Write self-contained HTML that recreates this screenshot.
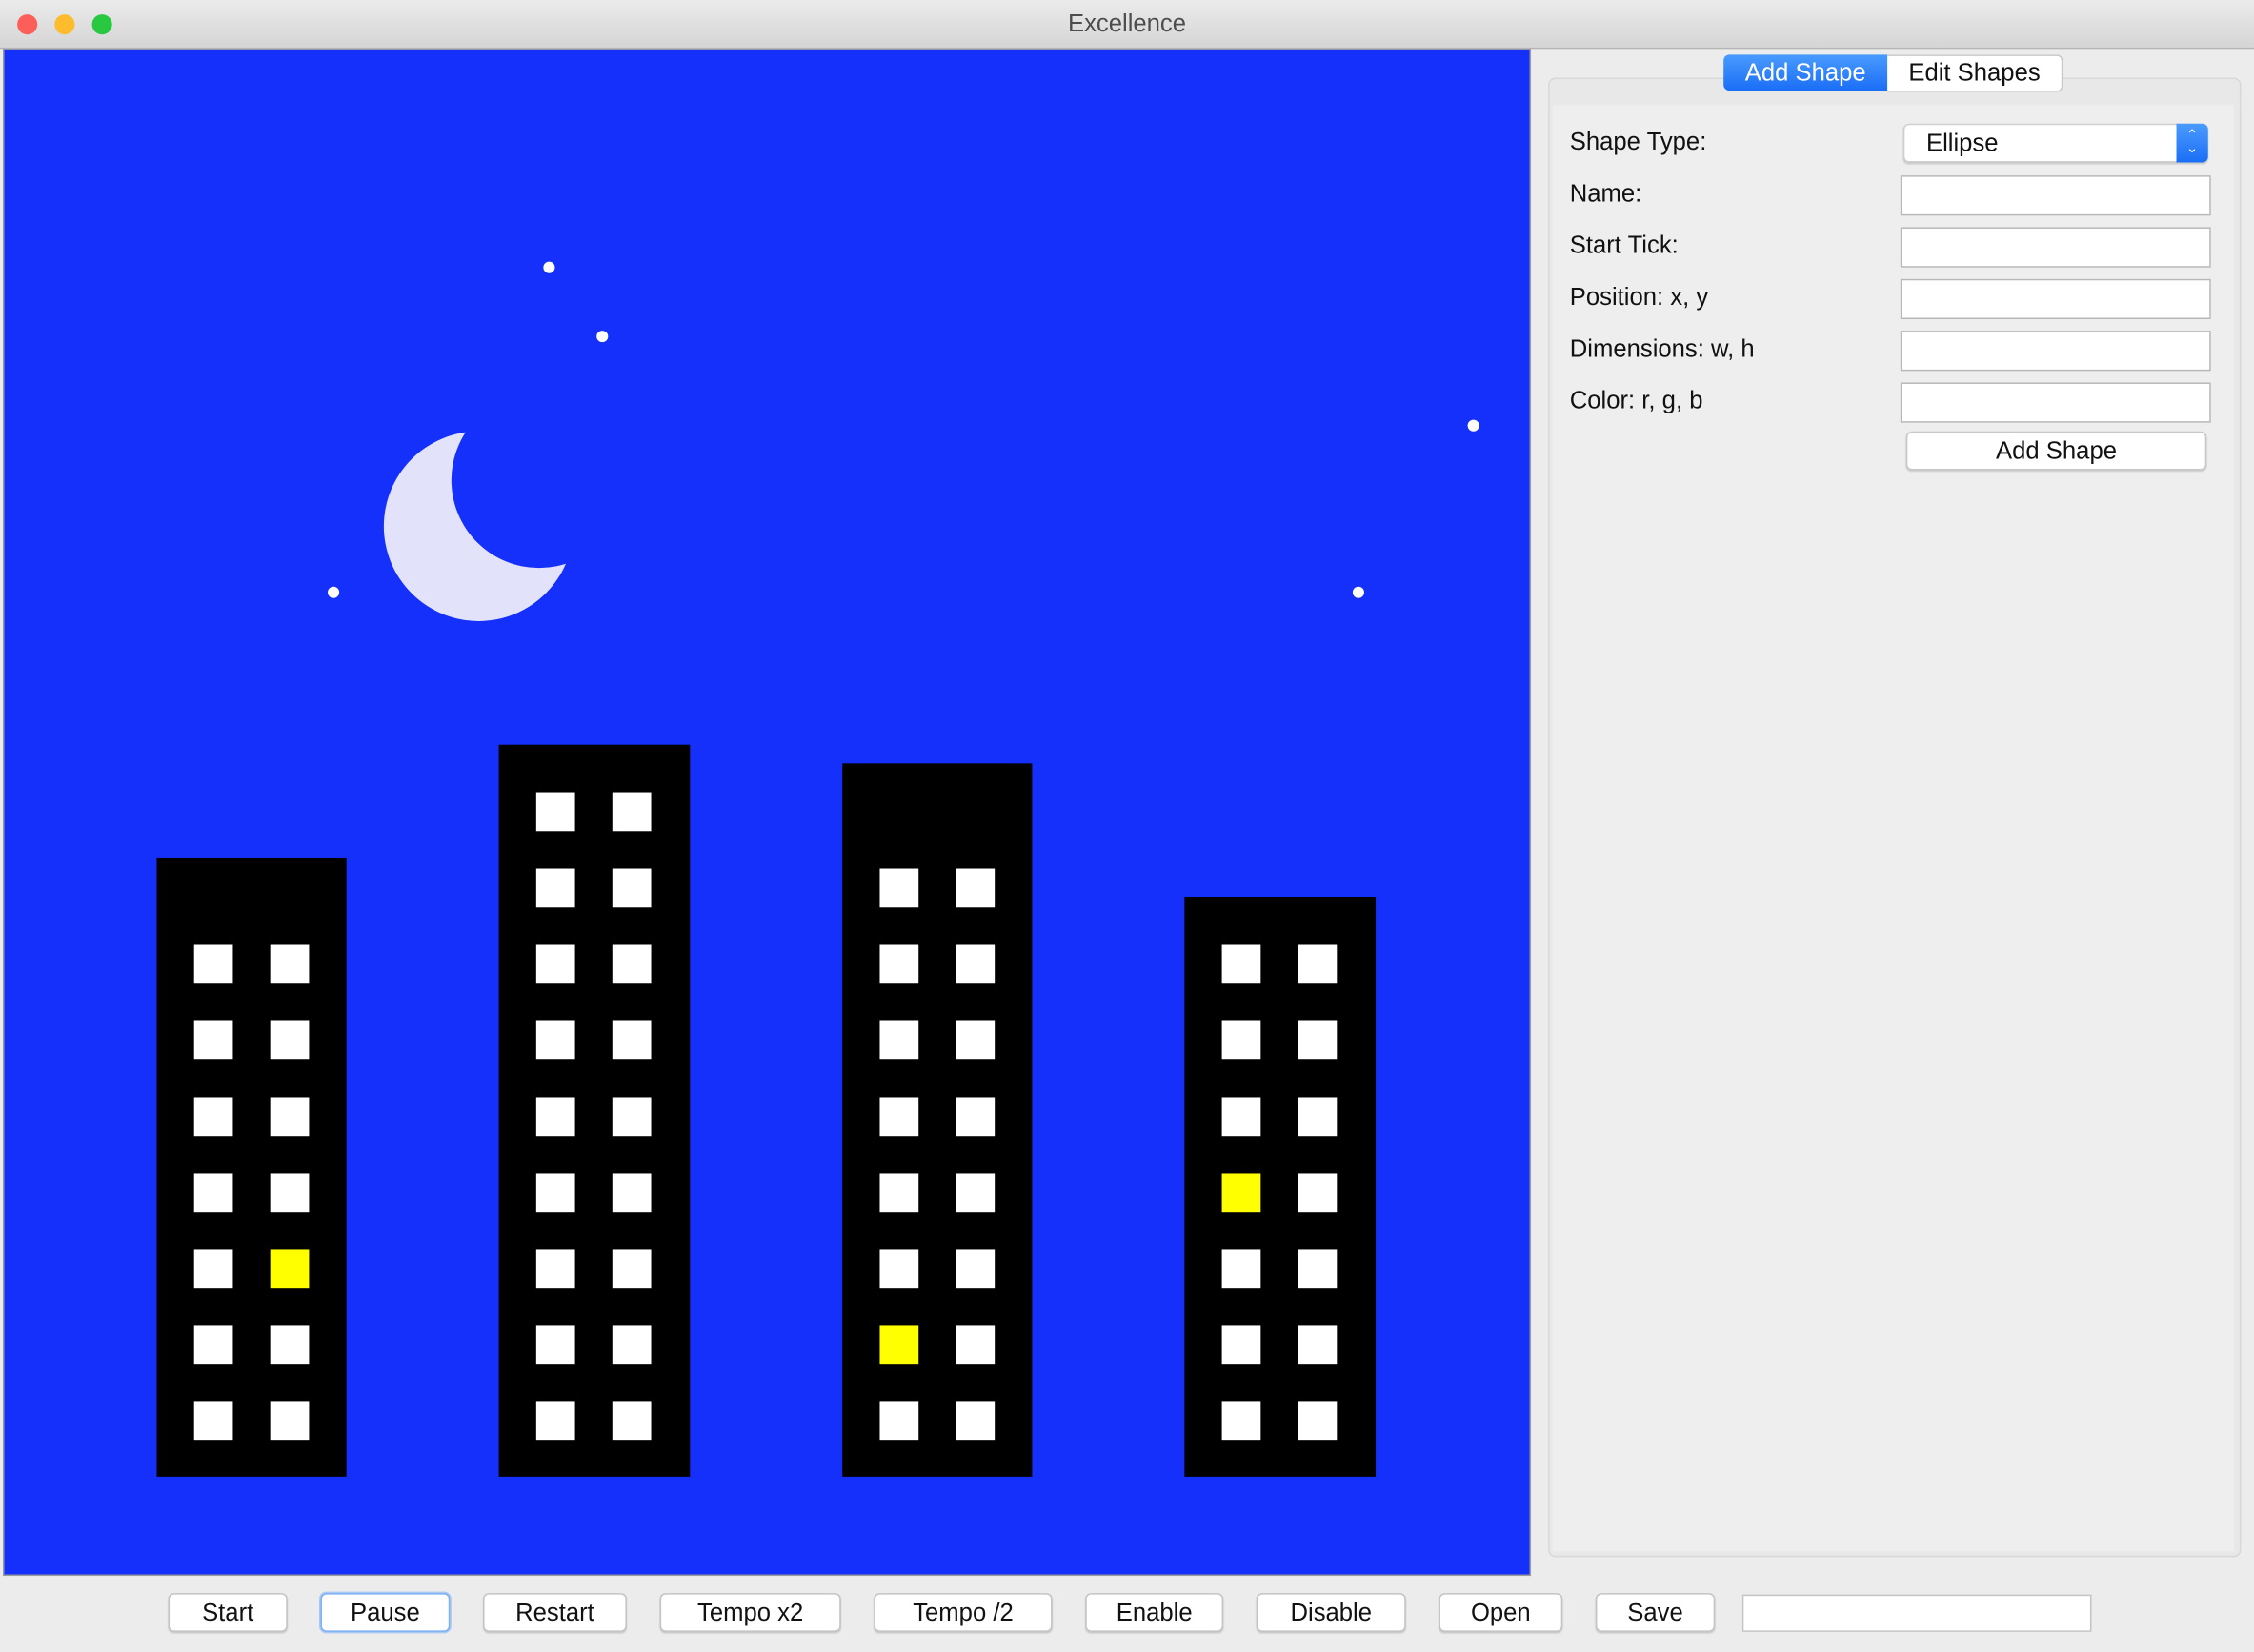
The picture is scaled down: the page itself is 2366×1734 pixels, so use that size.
<!DOCTYPE html>
<html><head><meta charset="utf-8"><style>
html,body{margin:0;padding:0;width:2366px;height:1734px;overflow:hidden;background:#ececec}
#w{position:absolute;left:0;top:0;width:1568px;height:1149px;transform:scale(1.50893,1.50914);transform-origin:0 0;font-family:"Liberation Sans",sans-serif;font-size:17px;color:#111}
.a{position:absolute}
#title{left:0;top:0;width:1568px;height:33px;background:linear-gradient(#ebebeb,#d5d5d5);border-bottom:1px solid #b5b5b5;text-align:center;line-height:34px;color:#4d4d4d;font-size:17px}
.dot{position:absolute;top:10px;width:14px;height:14px;border-radius:50%}
#cv{left:2px;top:34px;width:1061px;height:1060px;background:#1430fa;border:1px solid #9a9a9a;overflow:hidden}
.b{position:absolute;background:#000}
.wn{position:absolute;width:27px;height:27px;background:#fff}
.y{background:#ffff00}
.st{position:absolute;width:8px;height:8px;border-radius:50%;background:#fff}
.lbl{position:absolute;left:1092px}
.fld{position:absolute;left:1322px;width:214px;height:26px;background:#fff;border:1px solid #b8b8b8}
.btn{position:absolute;top:1108px;height:25px;background:#fff;border:1px solid #c4c4c4;border-radius:4px;text-align:center;line-height:25px;box-shadow:0 1px 1px rgba(0,0,0,.15)}
</style></head><body><div id="w">
<div id="title" class="a">Excellence
<div class="dot" style="left:12px;background:#fc5f57"></div>
<div class="dot" style="left:38px;background:#fdbc2e"></div>
<div class="dot" style="left:64px;background:#28c840"></div>
</div>
<div id="cv" class="a">
<svg width="1061" height="1060" style="position:absolute;left:0;top:0">
<defs><mask id="m"><rect width="1061" height="1060" fill="#fff"/><circle cx="372" cy="299" r="61" fill="#000"/></mask></defs>
<circle cx="330" cy="331" r="66" fill="#e2e2fb" mask="url(#m)"/>
</svg>
<div class="st" style="left:375px;top:147px"></div>
<div class="st" style="left:412px;top:195px"></div>
<div class="st" style="left:1018px;top:257px"></div>
<div class="st" style="left:225px;top:373px"></div>
<div class="st" style="left:938px;top:373px"></div>
</div>
<script>
var cv=document.getElementById('cv');
var B=[[106,562,132,[657],7,[[4,1]]],[344,483,133,[551],9,[]],[583,496,132,[604],8,[[6,0]]],[821,589,133,[657],7,[[3,0]]]];
var h='';
B.forEach(function(b){h+='<div class="b" style="left:'+b[0]+'px;top:'+b[1]+'px;width:'+b[2]+'px;height:'+(1027-35-b[1])+'px"></div>';
for(var r=0;r<b[4];r++)for(var c=0;c<2;c++){var yel=b[5].some(function(p){return p[0]==r&&p[1]==c});
h+='<div class="wn'+(yel?' y':'')+'" style="left:'+(b[0]+26+c*53)+'px;top:'+(b[3][0]-35+r*53)+'px"></div>';}});
cv.insertAdjacentHTML('beforeend',h);
</script>
<div class="a" style="left:1077px;top:54px;width:480px;height:1027px;background:#e8e8e8;border:1px solid #d8d8d8;border-radius:5px"></div>
<div class="a" style="left:1080px;top:73px;width:474px;height:1006px;background:#eeeeee"></div>
<div class="a" style="left:1199px;top:38px;width:114px;height:25px;background:linear-gradient(#4a9bff,#1a6ef5);color:#fff;border-radius:4px 0 0 4px;text-align:center;line-height:25px">Add Shape</div>
<div class="a" style="left:1313px;top:38px;width:121px;height:24px;background:#fff;border:1px solid #c8c8c8;border-left:none;border-radius:0 4px 4px 0;text-align:center;line-height:24px">Edit Shapes</div>
<div class="lbl" style="top:89px">Shape Type:</div>
<div class="lbl" style="top:125px">Name:</div>
<div class="lbl" style="top:161px">Start Tick:</div>
<div class="lbl" style="top:197px">Position: x, y</div>
<div class="lbl" style="top:233px">Dimensions: w, h</div>
<div class="lbl" style="top:269px">Color: r, g, b</div>
<div class="a" style="left:1324px;top:86px;width:210px;height:25px;background:#fff;border:1px solid #cfcfcf;border-radius:4px;line-height:25px;box-shadow:0 1px 1px rgba(0,0,0,.15)"><span style="margin-left:15px">Ellipse</span>
<div style="position:absolute;right:-1px;top:-1px;width:22px;height:27px;background:linear-gradient(#4a9bff,#1a6ef5);border-radius:0 4px 4px 0;color:#fff;font-size:10px;line-height:9px;text-align:center;padding-top:4px;box-sizing:border-box">&#8963;<br>&#8964;</div></div>
<div class="fld" style="top:122px"></div>
<div class="fld" style="top:158px"></div>
<div class="fld" style="top:194px"></div>
<div class="fld" style="top:230px"></div>
<div class="fld" style="top:266px"></div>
<div class="a" style="left:1326px;top:300px;width:207px;height:25px;background:#fff;border:1px solid #c8c8c8;border-radius:4px;text-align:center;line-height:25px;box-shadow:0 1px 1px rgba(0,0,0,.15)">Add Shape</div>
<div class="btn" style="left:117px;width:81px">Start</div>
<div class="btn" style="left:223px;width:88px;border-color:#7fb0f0;box-shadow:0 0 0 1px #a9c9f5">Pause</div>
<div class="btn" style="left:336px;width:98px">Restart</div>
<div class="btn" style="left:459px;width:124px">Tempo x2</div>
<div class="btn" style="left:608px;width:122px">Tempo /2</div>
<div class="btn" style="left:755px;width:94px">Enable</div>
<div class="btn" style="left:874px;width:102px">Disable</div>
<div class="btn" style="left:1001px;width:84px">Open</div>
<div class="btn" style="left:1110px;width:81px">Save</div>
<div class="a" style="left:1212px;top:1109px;width:241px;height:24px;background:#fff;border:1px solid #c4c4c4"></div>
</div></body></html>
